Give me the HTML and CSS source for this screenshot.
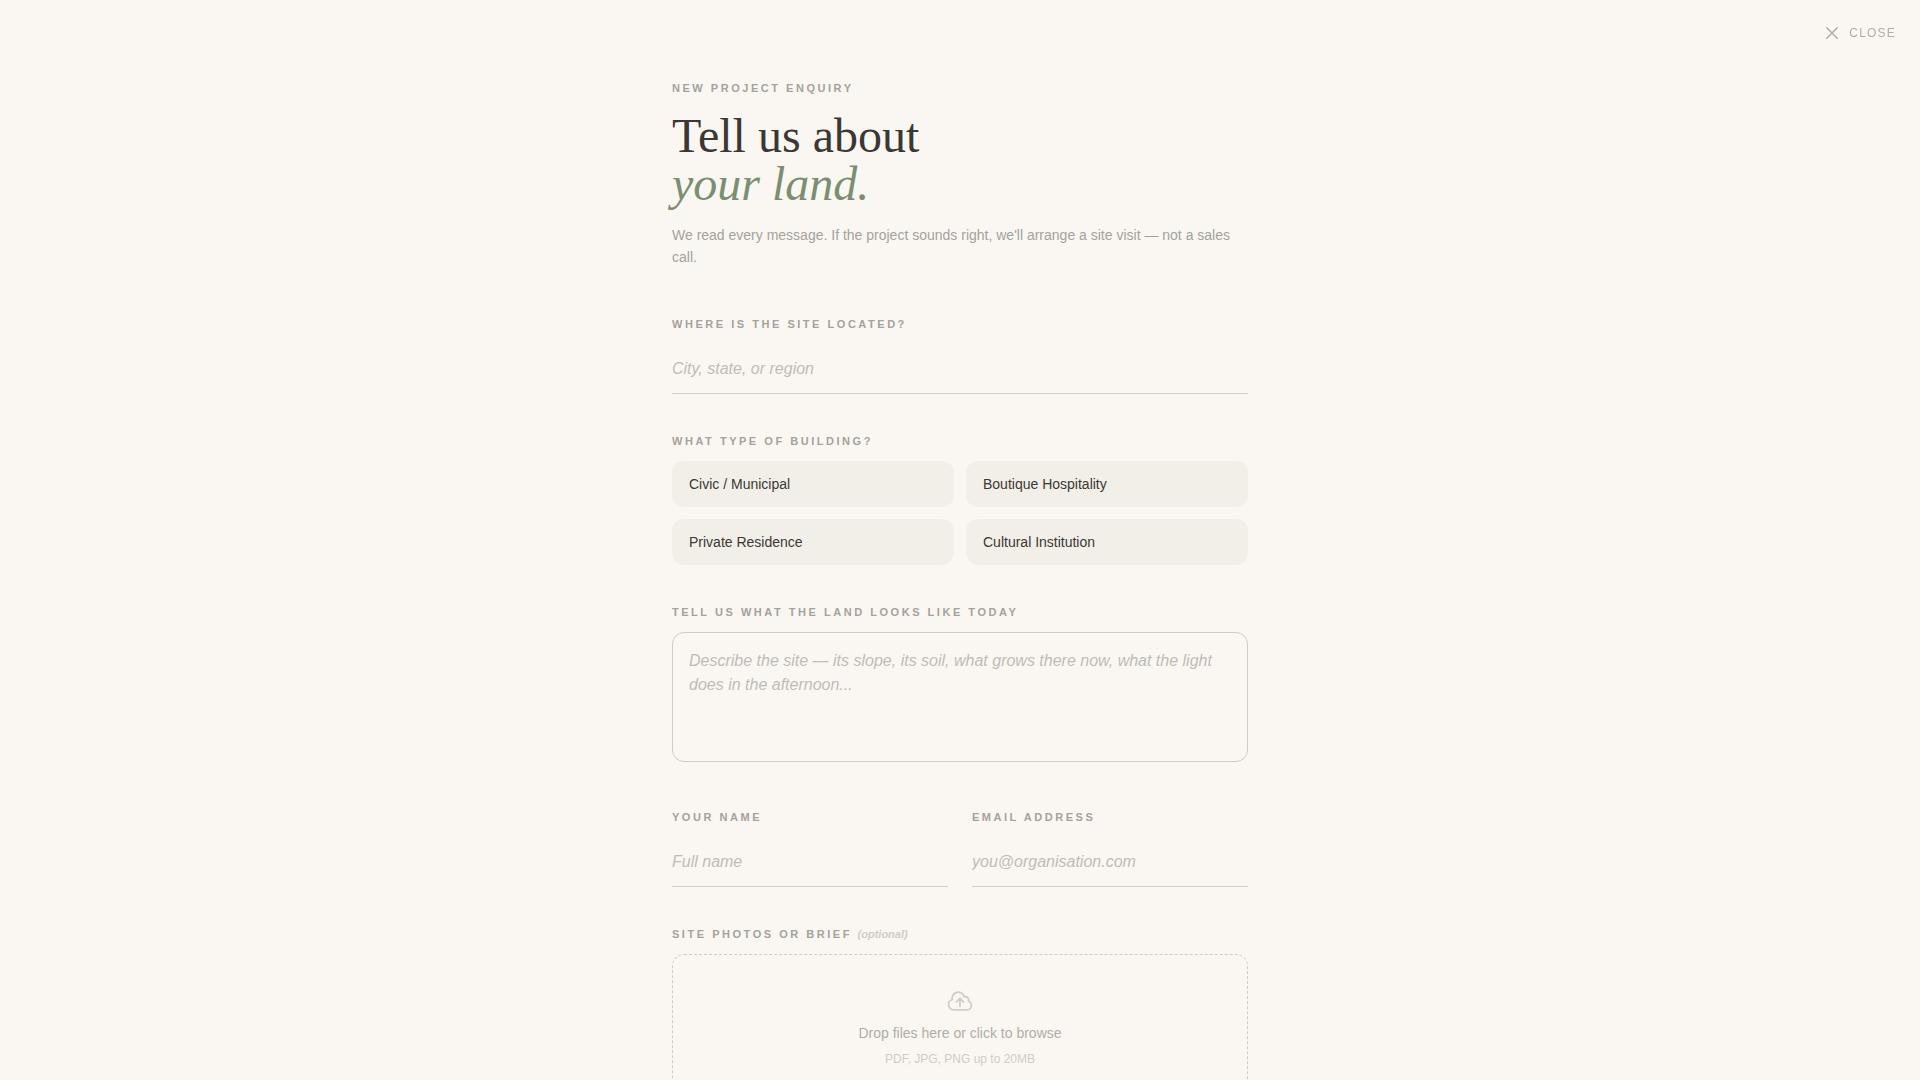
FILE: index.html
```html
<!DOCTYPE html>
<html lang="en">
<head>
<meta charset="utf-8">
<meta name="viewport" content="width=device-width, initial-scale=1">
<title>New project enquiry</title>
<link rel="stylesheet" href="styles.css">
</head>
<body>
<button type="button" class="close">
  <svg class="close-icon" viewBox="0 0 24 24" aria-hidden="true"><path d="M5 5l14 14M19 5L5 19"/></svg>
  Close
</button>
<main class="enquiry">
  <header class="intro">
    <p class="label">New project enquiry</p>
    <h1 class="title">Tell us about<br><em>your land.</em></h1>
    <p class="lead">We read every message. If the project sounds right, we'll arrange a site visit — not a sales call.</p>
  </header>
  <form class="form">
    <div class="field">
      <label class="label" for="location">Where is the site located?</label>
      <input class="input" id="location" type="text" placeholder="City, state, or region">
    </div>
    <div class="field" role="group" aria-labelledby="type-label">
      <span class="label" id="type-label">What type of building?</span>
      <div class="choices">
        <button type="button" class="choice">Civic / Municipal</button>
        <button type="button" class="choice">Boutique Hospitality</button>
        <button type="button" class="choice">Private Residence</button>
        <button type="button" class="choice">Cultural Institution</button>
      </div>
    </div>
    <div class="field">
      <label class="label" for="land">Tell us what the land looks like today</label>
      <textarea class="textarea" id="land" rows="4" placeholder="Describe the site — its slope, its soil, what grows there now, what the light does in the afternoon..."></textarea>
    </div>
    <div class="pair">
      <div class="field">
        <label class="label" for="name">Your name</label>
        <input class="input" id="name" type="text" placeholder="Full name">
      </div>
      <div class="field">
        <label class="label" for="email">Email address</label>
        <input class="input" id="email" type="email" placeholder="you@organisation.com">
      </div>
    </div>
    <div class="field">
      <label class="label" for="files">Site photos or brief <span class="optional">(optional)</span></label>
      <label class="dropzone" for="files">
        <svg class="upload-icon" viewBox="0 0 24 24" aria-hidden="true"><path d="M12 16.5V9.75m0 0l3 3m-3-3l-3 3M6.75 19.5a4.5 4.5 0 01-1.41-8.775 5.25 5.25 0 0110.233-2.33 3 3 0 013.758 3.848A3.752 3.752 0 0118 19.5H6.75z"/></svg>
        <span class="drop-title">Drop files here or click to browse</span>
        <span class="drop-note">PDF, JPG, PNG up to 20MB</span>
        <input class="file" id="files" type="file" multiple>
      </label>
    </div>
  </form>
</main>
</body>
</html>
```

FILE: styles.css
```css
:root {
  --paper: #faf7f2;
  --sand: #f2efe8;
  --ink: #3a3835;
  --muted: #a4a29c;
  --faint: #bfbcb6;
  --line: #cfccc6;
  --sage: #7a8f72;
}

* {
  box-sizing: border-box;
}

body {
  margin: 0;
  background: var(--paper);
  color: var(--ink);
  font-family: "Liberation Sans", Arial, sans-serif;
  overflow-x: hidden;
  scrollbar-width: none;
}

.close {
  position: fixed;
  top: 24px;
  right: 24px;
  display: flex;
  align-items: center;
  gap: 8px;
  padding: 0;
  border: 0;
  background: none;
  color: #b0ada8;
  font: 12px/18px "Liberation Sans", Arial, sans-serif;
  letter-spacing: 0.1em;
  text-transform: uppercase;
  cursor: pointer;
}

.close-icon {
  width: 18px;
  height: 18px;
  fill: none;
  stroke: currentColor;
  stroke-width: 2;
  stroke-linecap: round;
}

.enquiry {
  max-width: 640px;
  margin: 0 auto;
  padding: 80px 32px;
}

.label {
  display: block;
  margin: 0;
  color: var(--muted);
  font-size: 11px;
  font-weight: 700;
  line-height: 16px;
  letter-spacing: 0.23em;
  text-transform: uppercase;
}

.title {
  margin: 16px 0;
  font: 400 48px/48px "Liberation Serif", "Times New Roman", serif;
}

.title em {
  color: var(--sage);
}

.lead {
  margin: 0;
  color: var(--muted);
  font-size: 14px;
  line-height: 22px;
}

.form {
  display: flex;
  flex-direction: column;
  gap: 39px;
  margin-top: 48px;
}

.field {
  display: flex;
  flex-direction: column;
  gap: 12px;
}

.input,
.textarea {
  width: 100%;
  margin: 0;
  border: 0 solid var(--line);
  border-radius: 0;
  background: transparent;
  color: var(--ink);
  font: 16px/24px "Liberation Sans", Arial, sans-serif;
  outline: none;
}

.input {
  height: 50px;
  padding: 12px 0;
  border-bottom-width: 1px;
}

.textarea {
  height: 130px;
  margin-bottom: 8px;
  padding: 16px;
  border-width: 1px;
  border-radius: 12px;
  resize: none;
}

.input::placeholder,
.textarea::placeholder {
  color: var(--faint);
  font-style: italic;
  opacity: 1;
}

.choices {
  display: grid;
  grid-template-columns: 1fr 1fr;
  gap: 12px;
}

.choice {
  padding: 12px 16px;
  border: 1px solid transparent;
  border-radius: 12px;
  background: var(--sand);
  color: var(--ink);
  font: 14px/20px "Liberation Sans", Arial, sans-serif;
  text-align: left;
  cursor: pointer;
}

.pair {
  display: grid;
  grid-template-columns: 1fr 1fr;
  gap: 24px;
}

.optional {
  color: #cfccc6;
  font-style: italic;
  letter-spacing: 0;
  text-transform: none;
}

.dropzone {
  display: flex;
  flex-direction: column;
  align-items: center;
  padding: 32px;
  border: 1px dashed var(--line);
  border-radius: 12px;
  cursor: pointer;
}

.upload-icon {
  width: 28px;
  height: 28px;
  fill: none;
  stroke: #cfccc6;
  stroke-width: 1.5;
  stroke-linecap: round;
  stroke-linejoin: round;
}

.drop-title {
  margin-top: 8px;
  color: #b0ada8;
  font-size: 14px;
  line-height: 20px;
}

.drop-note {
  margin-top: 8px;
  color: #cfccc6;
  font-size: 12px;
  line-height: 16px;
}

.file {
  display: none;
}
```
